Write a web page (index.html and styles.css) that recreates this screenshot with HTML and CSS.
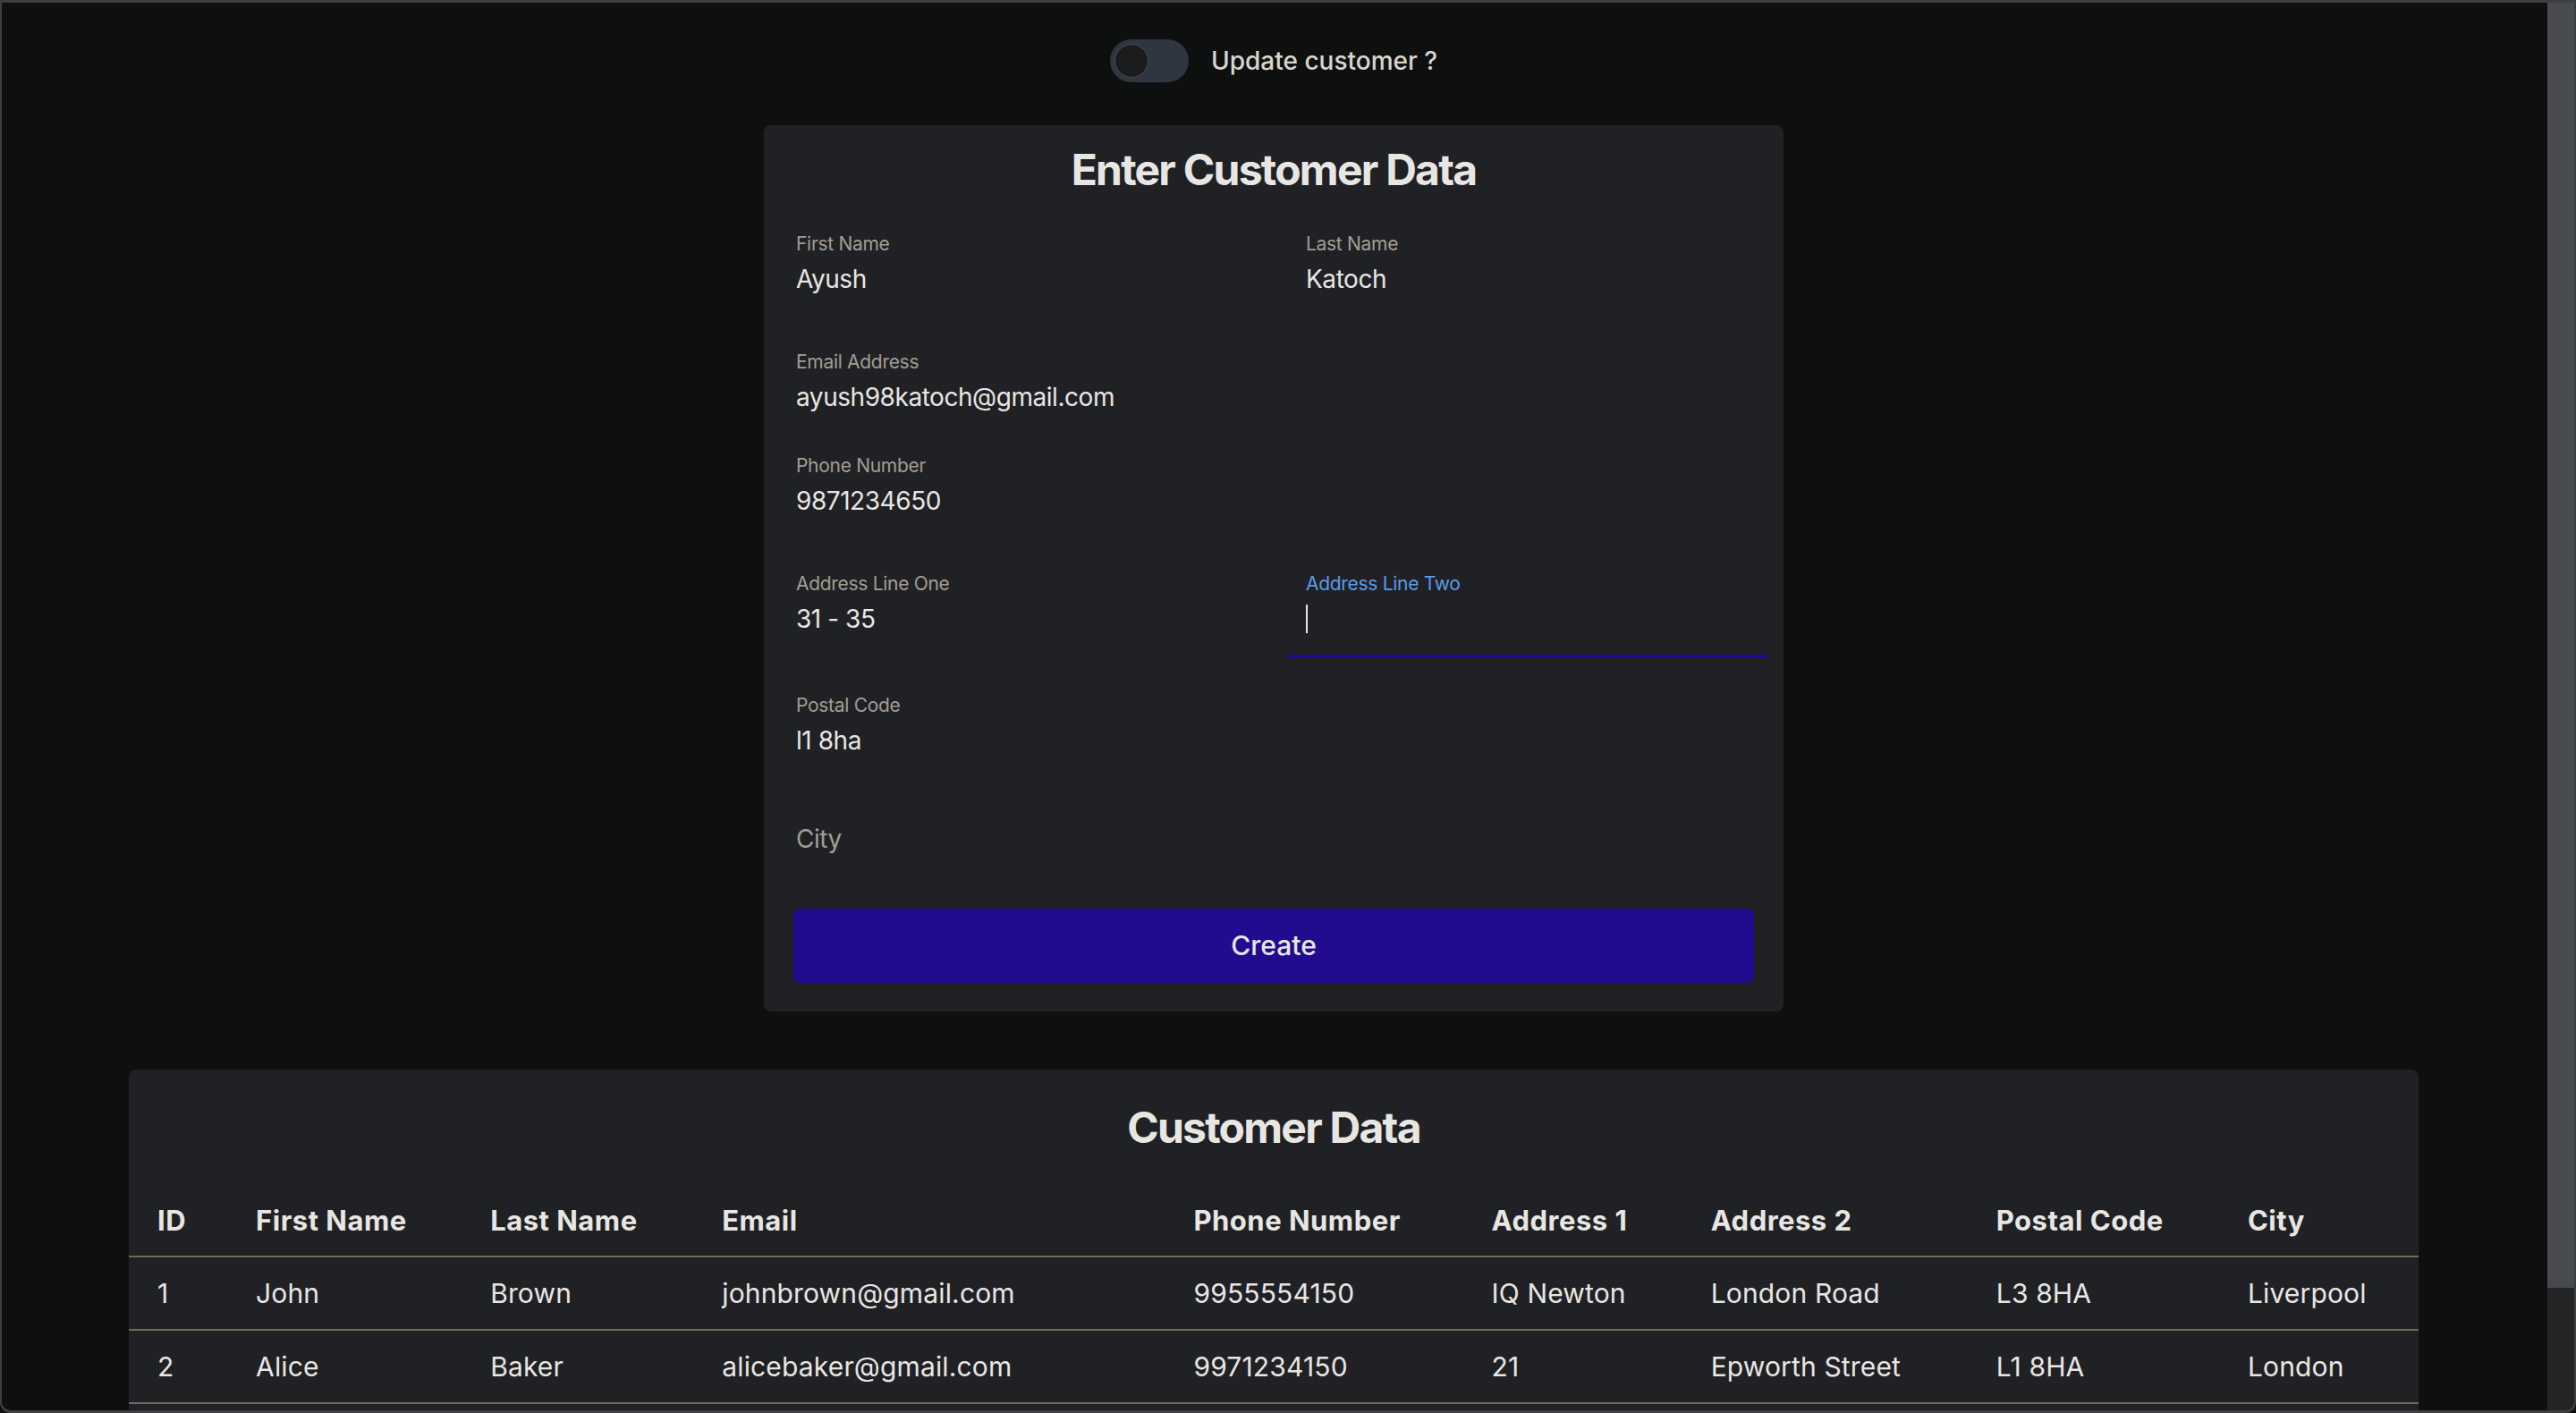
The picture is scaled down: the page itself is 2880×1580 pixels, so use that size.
FILE: index.html
```html
<!DOCTYPE html>
<html lang="en">
<head>
<meta charset="utf-8">
<title>Customers</title>
<link rel="stylesheet" href="styles.css">
</head>
<body>
<div class="page">
  <div class="toggle-row">
    <span class="switch"><span class="knob"></span></span>
    <span class="toggle-label">Update customer ?</span>
  </div>

  <form class="card form-card">
    <h1 class="card-title form-title">Enter Customer Data</h1>
    <div class="form-grid">
      <div class="field-row row-1">
        <div class="field"><label>First Name</label><div class="value">Ayush</div></div>
        <div class="field"><label>Last Name</label><div class="value">Katoch</div></div>
      </div>
      <div class="field-row row-2">
        <div class="field"><label>Email Address</label><div class="value">ayush98katoch@gmail.com</div></div>
      </div>
      <div class="field-row row-3">
        <div class="field"><label>Phone Number</label><div class="value">9871234650</div></div>
      </div>
      <div class="field-row row-4">
        <div class="field"><label>Address Line One</label><div class="value">31 - 35</div></div>
        <div class="field focused"><label>Address Line Two</label><div class="value"><span class="caret"></span></div></div>
      </div>
      <div class="field-row row-5">
        <div class="field"><label>Postal Code</label><div class="value">l1 8ha</div></div>
      </div>
      <div class="field-row row-6">
        <div class="field empty"><label class="hidden-label">&nbsp;</label><div class="value placeholder">City</div></div>
      </div>
    </div>
    <button type="button" class="create-btn">Create</button>
  </form>

  <section class="card table-card">
    <h2 class="card-title table-title">Customer Data</h2>
    <table class="data-table">
      <colgroup>
        <col class="c-id"><col class="c-first"><col class="c-last"><col class="c-email"><col class="c-phone"><col class="c-a1"><col class="c-a2"><col class="c-postal"><col class="c-city">
      </colgroup>
      <thead>
        <tr><th>ID</th><th>First Name</th><th>Last Name</th><th>Email</th><th>Phone Number</th><th>Address 1</th><th>Address 2</th><th>Postal Code</th><th>City</th></tr>
      </thead>
      <tbody>
        <tr><td>1</td><td>John</td><td>Brown</td><td>johnbrown@gmail.com</td><td>9955554150</td><td>IQ Newton</td><td>London Road</td><td>L3 8HA</td><td>Liverpool</td></tr>
        <tr><td>2</td><td>Alice</td><td>Baker</td><td>alicebaker@gmail.com</td><td>9971234150</td><td>21</td><td>Epworth Street</td><td>L1 8HA</td><td>London</td></tr>
      </tbody>
    </table>
  </section>
</div>
<div class="scrollbar"><div class="thumb"></div></div>
<div class="frame"></div>
</body>
</html>
```

FILE: styles.css
```css
html, body {
  margin: 0;
  padding: 0;
  height: 100%;
  overflow: hidden;
}
body {
  background: #0e100f;
  font-family: Inter, "Noto Sans", "Liberation Sans", sans-serif;
  color: #e8e6e3;
}
.page {
  width: 2848px;
  display: flex;
  flex-direction: column;
  align-items: center;
  padding-top: 44px;
}

/* toggle */
.toggle-row {
  display: flex;
  align-items: center;
  gap: 25px;
  height: 48px;
}
.switch {
  width: 88px;
  height: 48px;
  border-radius: 24px;
  background: #2f3541;
  display: flex;
  align-items: center;
  padding-left: 5px;
  box-sizing: border-box;
}
.knob {
  width: 38px;
  height: 38px;
  border-radius: 50%;
  background: #1b1c1e;
  border: 1.5px solid #4b4d4b;
  box-sizing: border-box;
}
.toggle-label {
  font-size: 28px;
  font-weight: 500;
  color: #d9d5ce;
}

/* cards */
.card {
  background: #202124;
  border-radius: 8px;
  box-sizing: border-box;
}
.card-title {
  margin: 0;
  font-size: 48px;
  line-height: 1.2;
  font-weight: 700;
  text-align: center;
  color: #e8e6e3;
  letter-spacing: -1.75px;
}
.form-card {
  width: 1140px;
  margin-top: 48px;
  padding: 21px 0 32px;
  display: flex;
  flex-direction: column;
}
.form-grid {
  margin: 42px 0 0 15px;
  width: 1108px;
  display: flex;
  flex-direction: column;
}
.field-row {
  display: grid;
  grid-template-columns: 538px 538px;
  column-gap: 32px;
}
.row-2 { margin-top: 37px; }
.row-3 { margin-top: 21px; }
.row-4 { margin-top: 37px; }
.row-5 { margin-top: 41px; }
.row-6 { margin-top: 15px; }

.field {
  padding: 0 0 23px 21px;
  border-bottom: 4px solid transparent;
  display: flex;
  flex-direction: column;
  gap: 10px;
}
.field.focused { border-bottom-color: #220b90; }
.field label {
  font-size: 21px;
  line-height: 24px;
  color: #a39d93;
  letter-spacing: -0.3px;
}
.field.focused label { color: #5b9be8; }
.value {
  font-size: 28px;
  line-height: 34px;
  height: 34px;
  color: #e8e6e3;
  display: flex;
  align-items: center;
  letter-spacing: -0.45px;
}
.value.placeholder { color: #a39d93; }
.caret {
  width: 2px;
  height: 32px;
  background: #e8e6e3;
}

.create-btn {
  margin: 34px 33px 0;
  height: 83px;
  border: 0;
  border-radius: 8px;
  background: #210b8f;
  color: #e8e6e3;
  font-family: inherit;
  font-size: 30px;
  font-weight: 500;
}

/* table */
.table-card {
  width: 2560px;
  margin-top: 65px;
  padding: 36px 0 200px;
}
.table-title { margin-bottom: 35px; }
.data-table {
  width: 100%;
  table-layout: fixed;
  border-collapse: separate;
  border-spacing: 0;
  font-size: 30px;
  color: #e8e6e3;
}
.c-id { width: 126px; }
.c-first { width: 262px; }
.c-last { width: 259px; }
.c-email { width: 527px; }
.c-phone { width: 333px; }
.c-a1 { width: 245px; }
.c-a2 { width: 319px; }
.c-postal { width: 281px; }
.c-city { width: 207px; }
.data-table th,
.data-table td {
  height: 80px;
  padding: 0 16px;
  text-align: left;
  vertical-align: middle;
  border-bottom: 2px solid #736b5e;
  white-space: nowrap;
}
.data-table th:first-child,
.data-table td:first-child { padding-left: 32px; }
.data-table th { font-weight: 700; font-size: 31px; letter-spacing: 0.5px; }
.data-table td { font-weight: 400; letter-spacing: 0.15px; }

/* window chrome */
.scrollbar {
  position: fixed;
  top: 3px;
  bottom: 3px;
  right: 2px;
  width: 30px;
  background: #232426;
}
.thumb {
  height: 1437px;
  background: #474b4e;
}
.frame {
  position: fixed;
  inset: 0;
  border: 2px solid #3d3e3e;
  border-top-width: 3px;
  border-bottom-width: 3px;
  border-radius: 0 0 12px 12px;
  pointer-events: none;
}
```
